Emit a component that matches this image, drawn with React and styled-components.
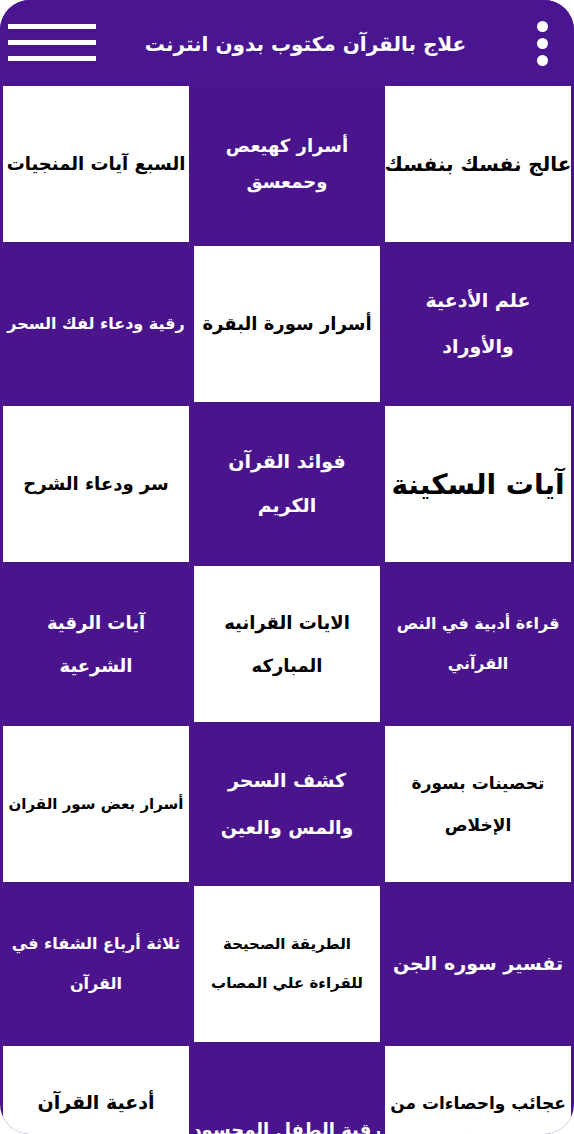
import React from 'react';
import styled, { createGlobalStyle } from 'styled-components';

const GlobalStyle = createGlobalStyle`
  html, body {
    margin: 0;
    padding: 0;
    background: #ffffff;
  }
`;

const purple = '#4a148c';

const Frame = styled.div`
  width: 574px;
  height: 1134px;
  border-radius: 30px;
  overflow: hidden;
  background: ${purple};
  font-family: "DejaVu Sans", "Noto Sans", sans-serif;
`;

const Toolbar = styled.header`
  height: 86px;
  display: flex;
  align-items: center;
  justify-content: space-between;
  padding: 0 26px 0 8px;
  box-sizing: border-box;
  background: #4a1590;
`;

const Burger = styled.div`
  width: 88px;
  display: flex;
  flex-direction: column;
  gap: 11px;
  margin-top: -2px;
`;

const Bar = styled.span`
  display: block;
  height: 5px;
  background: #ffffff;
`;

const Title = styled.h1`
  margin: 2px 0 0 40px;
  flex: 1;
  text-align: center;
  color: #ffffff;
  font-size: 20px;
  font-weight: 700;
  direction: rtl;
  white-space: nowrap;
`;

const Kebab = styled.div`
  display: flex;
  flex-direction: column;
  gap: 6px;
  margin-left: 62px;
`;

const Dot = styled.span`
  width: 11px;
  height: 11px;
  border-radius: 50%;
  background: #ffffff;
`;

const Grid = styled.main`
  direction: rtl;
  display: grid;
  grid-template-columns: repeat(3, 1fr);
  grid-auto-rows: 156px;
  gap: 4px 5px;
  padding: 0 3px;
`;

const Tile = styled.div`
  display: flex;
  align-items: center;
  justify-content: center;
  text-align: center;
  background: ${p => (p.$light ? '#ffffff' : purple)};
  color: ${p => (p.$light ? '#000000' : '#ffffff')};
  font-size: ${p => p.$size}px;
  line-height: ${p => p.$lh || 1.75};
  font-weight: 700;
  white-space: nowrap;
  overflow: hidden;
`;

const Label = styled.div`
  transform: translateY(${p => p.$shift || 0}px);
`;

const tiles = [
  { lines: ['عالج نفسك بنفسك'], size: 20, light: true },
  { lines: ['أسرار كهيعص', 'وحمعسق'], size: 18, lh: 2 },
  { lines: ['السبع آيات المنجيات'], size: 18, light: true },
  { lines: ['علم الأدعية', 'والأوراد'], size: 19, lh: 2.4 },
  { lines: ['أسرار سورة البقرة'], size: 18, light: true },
  { lines: ['رقية ودعاء لفك السحر'], size: 16 },
  { lines: ['آيات السكينة'], size: 28, light: true },
  { lines: ['فوائد القرآن', 'الكريم'], size: 19, lh: 2.3 },
  { lines: ['سر ودعاء الشرح'], size: 18, light: true },
  { lines: ['قراءة أدبية في النص', 'القرآني'], size: 16, lh: 2.5 },
  { lines: ['الايات القرانيه', 'المباركه'], size: 18, lh: 2.4, light: true },
  { lines: ['آيات الرقية', 'الشرعية'], size: 18, lh: 2.4 },
  { lines: ['تحصينات بسورة', 'الإخلاص'], size: 17, lh: 2.5, light: true },
  { lines: ['كشف السحر', 'والمس والعين'], size: 19, lh: 2.5 },
  { lines: ['أسرار بعض سور القران'], size: 15, light: true },
  { lines: ['تفسير سوره الجن'], size: 19 },
  { lines: ['الطريقة الصحيحة', 'للقراءة علي المصاب'], size: 15, lh: 2.6, light: true },
  { lines: ['ثلاثة أرباع الشفاء في', 'القرآن'], size: 16, lh: 2.5 },
  { lines: ['عجائب واحصاءات من', 'القرآن'], size: 17, lh: 2.4, light: true },
  { lines: ['رقية الطفل المحسود'], size: 18, shift: 6 },
  { lines: ['أدعية القرآن', 'الكريم'], size: 19, lh: 2.2, light: true },
];

export default function App() {
  return (
    <Frame>
      <GlobalStyle />
      <Toolbar>
        <Burger>
          <Bar />
          <Bar />
          <Bar />
        </Burger>
        <Title>علاج بالقرآن مكتوب بدون انترنت</Title>
        <Kebab>
          <Dot />
          <Dot />
          <Dot />
        </Kebab>
      </Toolbar>
      <Grid>
        {tiles.map((t, i) => (
          <Tile key={i} $light={t.light} $size={t.size} $lh={t.lh}>
            <Label $shift={t.shift}>
              {t.lines.map((l, j) => (
                <div key={j}>{l}</div>
              ))}
            </Label>
          </Tile>
        ))}
      </Grid>
    </Frame>
  );
}
